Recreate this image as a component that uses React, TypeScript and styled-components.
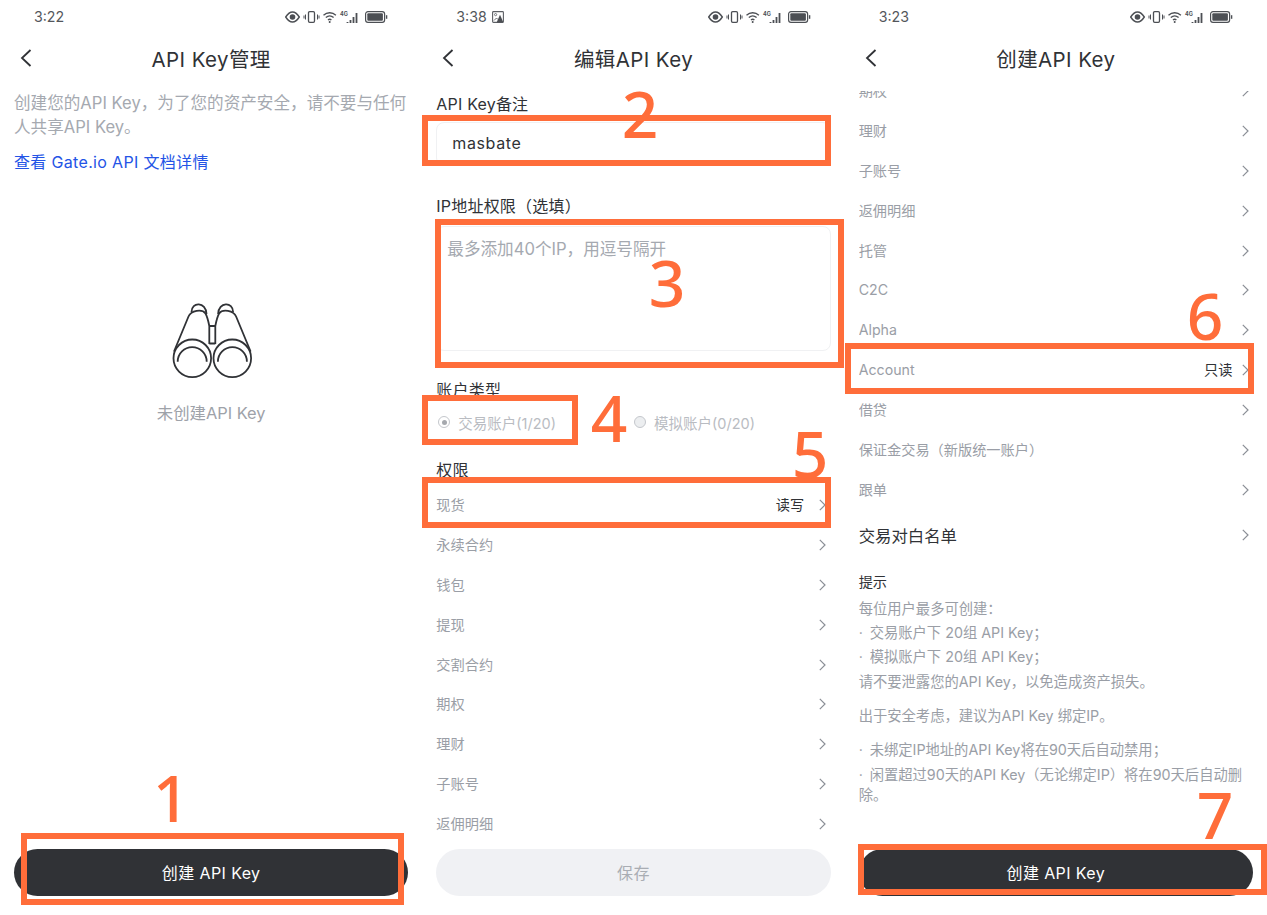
import React, { FunctionComponent } from 'react'
import styled, { createGlobalStyle } from 'styled-components'

const DARK = '#303236'
const ORANGE = '#ff6d3a'
const MUTED = '#9a9ea6'

const GlobalStyle = createGlobalStyle`
  html, body {
    margin: 0;
    padding: 0;
    background: #fff;
  }
  body {
    font-family: Inter, "Noto Sans CJK SC", sans-serif;
  }
  * {
    box-sizing: border-box;
  }
`

const ANNOTATION_BOXES = [
  { x: 21, y: 833, w: 383, h: 72 },
  { x: 422, y: 115, w: 409, h: 51 },
  { x: 435, y: 219, w: 409, h: 149 },
  { x: 422, y: 395, w: 156, h: 50 },
  { x: 422, y: 477, w: 409, h: 51 },
  { x: 845, y: 343, w: 409, h: 51 },
  { x: 858, y: 844, w: 409, h: 51 },
]

const ANNOTATION_NUMBERS = [
  { n: 1, x: 171, y: 798 },
  { n: 2, x: 640, y: 114 },
  { n: 3, x: 667, y: 283 },
  { n: 4, x: 609, y: 418 },
  { n: 5, x: 810, y: 454 },
  { n: 6, x: 1205, y: 316 },
  { n: 7, x: 1215, y: 815 },
]

const EDIT_ROWS = ['永续合约', '钱包', '提现', '交割合约', '期权', '理财', '子账号', '返佣明细']
const CREATE_ROWS_TOP = ['期权', '理财', '子账号', '返佣明细', '托管', 'C2C', 'Alpha']
const CREATE_ROWS_BOTTOM = ['借贷', '保证金交易（新版统一账户）', '跟单']

const StatusIcons: FunctionComponent = () => (
  <svg width="103" height="14" viewBox="0 0 103 14" fill="none" stroke="#4c4f54">
    <path d="M0.7 7C3 3.4 5.2 2 7.5 2s4.5 1.4 6.8 5c-2.3 3.6-4.5 5-6.8 5S3 10.6 0.7 7z" strokeWidth="1.4" />
    <circle cx="7.5" cy="7" r="2.8" fill="#4c4f54" stroke="none" />
    <rect x="23.5" y="1.7" width="6" height="10.6" rx="1.2" strokeWidth="1.3" />
    <path d="M20.5 4.5v5M32.5 4.5v5M34 5.5v3M19 5.5v3" strokeWidth="1" />
    <path d="M38.5 5.2c3.6-3.3 8.8-3.3 12.4 0M40.8 7.6c2.4-2.1 5.4-2.1 7.8 0M43 10c1-.9 2.4-.9 3.4 0" strokeWidth="1.3" />
    <circle cx="44.7" cy="12" r="1" fill="#4c4f54" stroke="none" />
    <text x="55" y="6" fontSize="5.5" fontWeight="700" fill="#4c4f54" stroke="none" fontFamily="Inter, sans-serif">4G</text>
    <path d="M62.5 13v-1M65.5 13v-3M68.5 13V7M71.5 13V3" strokeWidth="1.8" />
    <rect x="80.6" y="1.6" width="19" height="10.8" rx="2.4" strokeWidth="1.2" />
    <rect x="82.3" y="3.3" width="15.6" height="7.4" rx="1" fill="#4c4f54" stroke="none" />
    <path d="M101.6 5.2v3.6" strokeWidth="1.4" />
  </svg>
)

const ImageNotice: FunctionComponent = () => (
  <svg width="12" height="12" viewBox="0 0 12 12" fill="none" stroke="#5c5f64">
    <rect x="0.6" y="0.6" width="10.8" height="10.8" rx="0.8" strokeWidth="1.1" />
    <circle cx="3.6" cy="3.600" r="1.1" strokeWidth="0.8" />
    <path d="M2 9.500l2.500-2.500 1.500 1.500" strokeWidth="0.9" />
    <path d="M8 3.800l3.400 7.600H4.600z" fill="#4c4f54" stroke="none" />
  </svg>
)

const BackIcon: FunctionComponent = () => (
  <svg width="12" height="18" viewBox="0 0 12 18" fill="none" stroke={DARK} strokeWidth="1.8">
    <path d="M10.5 1L2 9l8.5 8" />
  </svg>
)

const ChevronIcon: FunctionComponent = () => (
  <svg width="7" height="12" viewBox="0 0 7 12" fill="none" stroke="#8b8f96" strokeWidth="1.2">
    <path d="M0.8 0.8L6 6L0.8 11.2" />
  </svg>
)

const BinocularsIcon: FunctionComponent = () => (
  <svg width="84" height="84" viewBox="0 0 84 84" fill="none" stroke={DARK} strokeWidth="1.8">
    <circle cx="23.3" cy="60.3" r="18.8" />
    <circle cx="63.3" cy="60.3" r="18.8" />
    <path d="M8.700 63.700a14.500 14.500 0 0 1 29 0" />
    <path d="M48.900 63.700a14.500 14.500 0 0 1 29 0" />
    <path d="M5 53.500L19.500 18.500C22 12.500 33 10.500 36.500 15.500C38.500 19 39.500 24 40.300 28V46" />
    <path d="M81.600 53.500L67.100 18.500C64.600 12.500 53.600 10.500 50.100 15.500C48.100 19 47.100 24 46.300 28V46" />
    <path d="M22.500 14C22.500 3.500 37 3.500 37.500 16" />
    <path d="M64.100 14C64.100 3.500 49.600 3.500 49.100 16" />
    <path d="M40.300 28h6M40.300 45.500h6" />
  </svg>
)

const StatusBar: FunctionComponent<{ time: string; notice?: boolean }> = ({ time, notice }) => (
  <StatusRow>
    <TimeGroup>
      <Time>{time}</Time>
      {notice && <ImageNotice />}
    </TimeGroup>
    <StatusIcons />
  </StatusRow>
)

const NavBar: FunctionComponent<{ title: string }> = ({ title }) => (
  <Nav>
    <BackButton>
      <BackIcon />
    </BackButton>
    <NavTitle>{title}</NavTitle>
  </Nav>
)

const PermissionRow: FunctionComponent<{ label: string; value?: string; valueGap?: number }> = ({
  label,
  value,
  valueGap = 15,
}) => (
  <Row>
    <RowLabel>{label}</RowLabel>
    {value && <RowValue $gap={valueGap}>{value}</RowValue>}
    <ChevronIcon />
  </Row>
)

const ManageScreen: FunctionComponent = () => (
  <Phone>
    <StatusBar time="3:22" />
    <NavBar title="API Key管理" />
    <Body>
      <Intro>创建您的API Key，为了您的资产安全，请不要与任何人共享API Key。</Intro>
      <DocLink>查看 Gate.io API 文档详情</DocLink>
      <Empty>
        <BinocularsIcon />
        <EmptyText>未创建API Key</EmptyText>
      </Empty>
    </Body>
    <Footer>
      <PrimaryButton>创建 API Key</PrimaryButton>
    </Footer>
  </Phone>
)

const EditScreen: FunctionComponent = () => (
  <Phone>
    <StatusBar time="3:38" notice />
    <NavBar title="编辑API Key" />
    <Body>
      <FieldLabel $top={7}>API Key备注</FieldLabel>
      <NameInput>masbate</NameInput>
      <FieldLabel $top={28}>IP地址权限（选填）</FieldLabel>
      <IpArea>最多添加40个IP，用逗号隔开</IpArea>
      <FieldLabel $top={27}>账户类型</FieldLabel>
      <RadioRow>
        <RadioOption>
          <Radio $checked />
          交易账户(1/20)
        </RadioOption>
        <RadioOption>
          <Radio />
          模拟账户(0/20)
        </RadioOption>
      </RadioRow>
      <FieldLabel $top={24}>权限</FieldLabel>
      <RowList $top={3}>
        <PermissionRow label="现货" value="读写" />
        {EDIT_ROWS.map((label) => (
          <PermissionRow key={label} label={label} />
        ))}
      </RowList>
    </Body>
    <Footer>
      <SaveButton>保存</SaveButton>
    </Footer>
  </Phone>
)

const CreateScreen: FunctionComponent = () => (
  <Phone>
    <StatusBar time="3:23" />
    <NavBar title="创建API Key" />
    <Body>
      <ScrollClip>
        <RowList $top={-20}>
          {CREATE_ROWS_TOP.map((label) => (
            <PermissionRow key={label} label={label} />
          ))}
          <PermissionRow label="Account" value="只读" valueGap={9} />
          {CREATE_ROWS_BOTTOM.map((label) => (
            <PermissionRow key={label} label={label} />
          ))}
        </RowList>
      </ScrollClip>
      <WhitelistRow>
        <span>交易对白名单</span>
        <ChevronIcon />
      </WhitelistRow>
      <TipsTitle>提示</TipsTitle>
      <TipLine>每位用户最多可创建：</TipLine>
      <TipLine>
        <Dot>·</Dot>交易账户下 20组 API Key；
      </TipLine>
      <TipLine>
        <Dot>·</Dot>模拟账户下 20组 API Key；
      </TipLine>
      <TipLine>请不要泄露您的API Key，以免造成资产损失。</TipLine>
      <TipLine $top={10}>出于安全考虑，建议为API Key 绑定IP。</TipLine>
      <TipLine $top={10}>
        <Dot>·</Dot>未绑定IP地址的API Key将在90天后自动禁用；
      </TipLine>
      <TipWrapped>
        <Dot>·</Dot>闲置超过90天的API Key（无论绑定IP）将在90天后自动删除。
      </TipWrapped>
    </Body>
    <Footer>
      <PrimaryButton>创建 API Key</PrimaryButton>
    </Footer>
  </Phone>
)

export default function App() {
  return (
    <Page>
      <GlobalStyle />
      <ManageScreen />
      <EditScreen />
      <CreateScreen />
      {ANNOTATION_BOXES.map((box) => (
        <AnnotationBox key={`${box.x}-${box.y}`} $x={box.x} $y={box.y} $w={box.w} $h={box.h} />
      ))}
      {ANNOTATION_NUMBERS.map((item) => (
        <AnnotationNumber key={item.n} $x={item.x} $y={item.y}>
          {item.n}
        </AnnotationNumber>
      ))}
    </Page>
  )
}

const Page = styled.div`
  position: relative;
  display: grid;
  grid-template-columns: repeat(3, 1fr);
  width: 1267px;
  height: 915px;
  overflow: hidden;
  background: #fff;
`

const Phone = styled.section`
  display: flex;
  flex-direction: column;
  height: 915px;
  min-width: 0;
`

const StatusRow = styled.div`
  display: flex;
  flex: 0 0 33px;
  align-items: center;
  justify-content: space-between;
  padding: 0 34px;
`

const TimeGroup = styled.div`
  display: flex;
  align-items: center;
  gap: 5px;
`

const Time = styled.span`
  color: #53565b;
  font-size: 14.200px;
`

const Nav = styled.header`
  display: flex;
  position: relative;
  flex: 0 0 52px;
  align-items: center;
  justify-content: center;
  padding-bottom: 2px;
`

const BackButton = styled.span`
  display: flex;
  position: absolute;
  top: 16px;
  left: 20px;
`

const NavTitle = styled.h1`
  margin: 0;
  color: ${DARK};
  font-size: 20.500px;
  font-weight: 400;
  letter-spacing: 0.4px;
`

const Body = styled.main`
  flex: 1 1 auto;
  min-height: 0;
  padding: 0 14px;
  overflow: hidden;
`

const Footer = styled.footer`
  flex: 0 0 66px;
  padding: 0 14px 19px;
`

const PrimaryButton = styled.button`
  width: 100%;
  height: 47px;
  padding: 0 0 2px;
  border: 0;
  border-radius: 24px;
  background: ${DARK};
  color: #fff;
  font-family: inherit;
  font-size: 16px;
  letter-spacing: 0.4px;
`

const SaveButton = styled(PrimaryButton)`
  background: #f0f1f4;
  color: #a9adb3;
`

const Intro = styled.p`
  margin: 6px 0 0;
  color: #a5a9b0;
  font-size: 16.600px;
  line-height: 24px;
`

const DocLink = styled.a`
  display: block;
  margin-top: 11px;
  color: #2354e6;
  font-size: 16px;
  letter-spacing: 0.33px;
  line-height: 24px;
`

const Empty = styled.div`
  display: flex;
  flex-direction: column;
  align-items: center;
  margin-top: 124px;
`

const EmptyText = styled.span`
  margin-top: 19px;
  color: #9ea2a9;
  font-size: 16.400px;
  line-height: 24px;
`

const FieldLabel = styled.h2<{ $top: number }>`
  margin: ${({ $top }) => $top}px 0 0;
  color: ${DARK};
  font-size: 16px;
  font-weight: 400;
  letter-spacing: 0.2px;
  line-height: 24px;
`

const NameInput = styled.div`
  display: flex;
  align-items: center;
  height: 44px;
  margin-top: 6px;
  padding: 0 15px 2px;
  border: 1px solid #f0f1f3;
  border-radius: 8px;
  color: ${DARK};
  font-size: 16px;
  letter-spacing: 0.6px;
`

const IpArea = styled.div`
  height: 125px;
  margin-top: 8px;
  padding: 10px 10px;
  border: 1px solid #f0f1f3;
  border-radius: 8px;
  color: #a5a9b0;
  font-size: 16.600px;
  line-height: 24px;
`

const RadioRow = styled.div`
  display: flex;
  gap: 78px;
  height: 24px;
  margin-top: 8px;
  padding-left: 2px;
`

const RadioOption = styled.label`
  display: flex;
  align-items: center;
  gap: 8px;
  color: #b9bcc2;
  font-size: 14.500px;
`

const Radio = styled.span<{ $checked?: boolean }>`
  display: flex;
  align-items: center;
  justify-content: center;
  width: 12px;
  height: 12px;
  border: 1px solid #c4c7cc;
  border-radius: 50%;
  background: ${({ $checked }) => ($checked ? '#fff' : '#eceef0')};

  &::after {
    display: ${({ $checked }) => ($checked ? 'block' : 'none')};
    width: 5px;
    height: 5px;
    border-radius: 50%;
    background: #a6a9ae;
    content: '';
  }
`

const RowList = styled.div<{ $top: number }>`
  margin-top: ${({ $top }) => $top}px;
`

const ScrollClip = styled.div`
  margin-top: 6px;
  overflow: hidden;
`

const Row = styled.div`
  display: flex;
  align-items: center;
  height: 39.900px;
  padding-right: 4.500px;
  color: ${MUTED};
  font-size: 14.200px;
`

const RowLabel = styled.span`
  flex: 1 1 auto;
  margin-top: -2px;
`

const RowValue = styled.span<{ $gap: number }>`
  margin-top: -2px;
  margin-right: ${({ $gap }) => $gap}px;
  color: ${DARK};
`

const WhitelistRow = styled.div`
  display: flex;
  align-items: center;
  justify-content: space-between;
  height: 40px;
  margin-top: 5px;
  padding-right: 4.500px;
  color: ${DARK};
  font-size: 16.400px;
`

const TipsTitle = styled.h3`
  margin: 15px 0 3px;
  color: ${DARK};
  font-size: 14.200px;
  font-weight: 400;
  line-height: 24px;
`

const TipLine = styled.p<{ $top?: number }>`
  margin: ${({ $top }) => $top ?? 0}px 0 0;
  color: ${MUTED};
  font-size: 14.300px;
  line-height: 24.300px;
`

const TipWrapped = styled(TipLine)`
  margin-top: 2px;
  line-height: 20px;
`

const Dot = styled.span`
  display: inline-block;
  width: 11px;
`

const AnnotationBox = styled.div<{ $x: number; $y: number; $w: number; $h: number }>`
  position: absolute;
  top: ${({ $y }) => $y}px;
  left: ${({ $x }) => $x}px;
  width: ${({ $w }) => $w}px;
  height: ${({ $h }) => $h}px;
  border: 6px solid ${ORANGE};
`

const AnnotationNumber = styled.span<{ $x: number; $y: number }>`
  position: absolute;
  top: ${({ $y }) => $y}px;
  left: ${({ $x }) => $x}px;
  color: ${ORANGE};
  font-family: "Noto Sans", sans-serif;
  font-size: 64px;
  font-weight: 500;
  line-height: 1;
  transform: translate(-50%, -50%);
`
